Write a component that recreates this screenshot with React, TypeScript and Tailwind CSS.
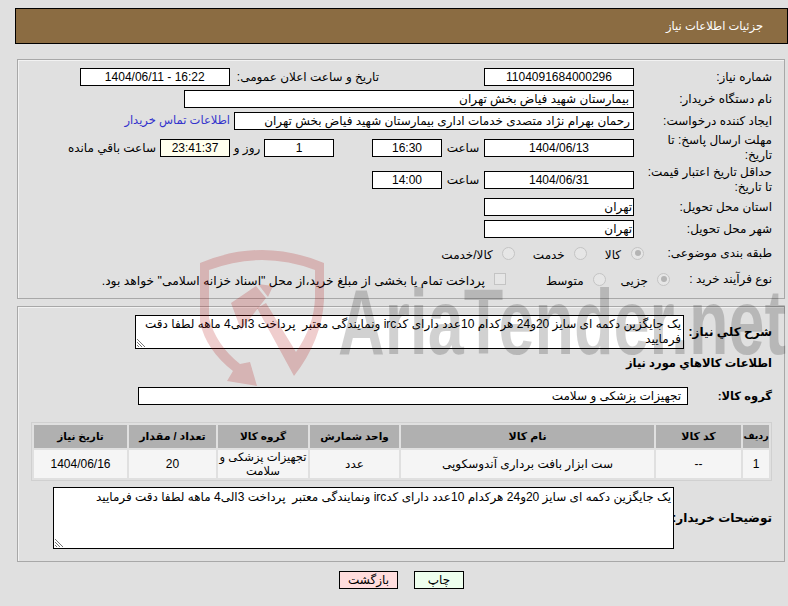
import type { ReactNode } from "react";

const font = "[font-family:'Liberation_Sans','DejaVu_Sans',sans-serif]";
const panel = "border border-[#a8a8a8] shadow-[inset_1px_1px_0_#f2f2f2]";

function Field({ children, className }: { children: ReactNode; className: string }) {
  return (
    <div className={`h-[18px] border border-black bg-white text-[12px] leading-[16px] whitespace-nowrap overflow-hidden shrink-0 ${className}`}>
      {children}
    </div>
  );
}

function Label({ children, className = "" }: { children: ReactNode; className?: string }) {
  return <div className={`w-[134px] shrink-0 text-[12px] leading-[15px] ${className}`}>{children}</div>;
}

function Radio({ on }: { on?: boolean }) {
  return (
    <span className="inline-flex w-[13px] h-[13px] rounded-full border border-[#c4c4c4] bg-[#e6e6e6] items-center justify-center shrink-0">
      {on && <span className="w-[6px] h-[6px] rounded-full bg-[#b4b4b4]" />}
    </span>
  );
}

function Grip() {
  return (
    <svg className="absolute left-px bottom-px" width="8" height="8" viewBox="0 0 8 8" stroke="#777" strokeWidth="1" fill="none">
      <path d="M0 0 L8 8 M0 3 L5 8 M0 6 L2 8" />
    </svg>
  );
}

// the site's watermark lies over the whole form, fields included
function Watermark() {
  return (
    <svg className="absolute left-0 top-0 pointer-events-none [direction:ltr]" width="788" height="606" viewBox="0 0 788 606">
      <path
        d="M200 263 Q262 237 324 263 V300 Q322 340 294 376 L257 308 L266 303 L296 352 Q314 326 315 298 V270 Q262 250 209 270 V318 Q216 345 240 364 L250 362 L257 386 L227 381 L233 371 Q206 350 200 322 Z"
        fill="#b00505"
        fillOpacity="0.2"
      />
      <path d="M231 303 L256 286 L266 298 L241 330 Z M258 284 L273 286 L268 297 Z" fill="#b00505" fillOpacity="0.2" />
      <text
        x="338"
        y="354"
        direction="ltr"
        textAnchor="start"
        fontFamily="'Liberation Sans', sans-serif"
        fontWeight="700"
        fontSize="92"
        fill="#000"
        fillOpacity="0.18"
        textLength="448"
        lengthAdjust="spacingAndGlyphs"
      >
        AriaTender.net
      </text>
    </svg>
  );
}

const desc = "یک جایگزین دکمه ای سایز 20و24 هرکدام 10عدد دارای کدirc ونمایندگی معتبر  پرداخت 3الی4 ماهه لطفا دقت فرمایید";

export default function App() {
  return (
    <div dir="rtl" className={`relative w-[788px] h-[606px] bg-[#e0e0e0] text-black overflow-hidden ${font}`}>
      <div className="mt-2 ml-[15px] h-[36px] border border-black bg-[#8b6c42] text-white text-[11.5px] flex items-center pr-[24px] pt-[2px]">
        جزئیات اطلاعات نیاز
      </div>

      <div className={`mt-[15px] ml-[17px] mr-[3px] h-[240px] pr-[12px] pt-[8px] ${panel}`}>
        <div className="flex items-center h-[18px]">
          <Label>شماره نیاز:</Label>
          <Field className="w-[150px] mr-[4px] text-center">1104091684000296</Field>
          <div className="mr-[105px] text-[12px] whitespace-nowrap shrink-0">تاریخ و ساعت اعلان عمومی:</div>
          <Field className="w-[150px] mr-[7px] text-center [direction:ltr]">1404/06/11 - 16:22</Field>
        </div>
        <div className="flex items-center h-[18px] mt-1">
          <Label>نام دستگاه خریدار:</Label>
          <Field className="w-[450px] mr-[4px] pr-[4px]">بیمارستان شهید فیاض بخش تهران</Field>
        </div>
        <div className="flex items-center h-[18px] mt-1">
          <Label>ایجاد کننده درخواست:</Label>
          <Field className="w-[400px] mr-[4px] pr-[3px]">رحمان بهرام نژاد متصدی خدمات اداری بیمارستان شهید فیاض بخش تهران</Field>
          <a className="mr-[4px] text-[11.5px] text-[#3333cc] whitespace-nowrap">اطلاعات تماس خریدار</a>
        </div>
        <div className="flex items-center h-[30px] mt-[3px]">
          <Label>مهلت ارسال پاسخ: تا تاریخ:</Label>
          <Field className="w-[150px] mr-[4px] text-center">1404/06/13</Field>
          <div className="w-[42px] text-center text-[12px] shrink-0">ساعت</div>
          <Field className="w-[70px] text-center">16:30</Field>
          <div className="w-[38px]" />
          <Field className="w-[70px] text-center">1</Field>
          <div className="w-[34px] text-center text-[12px] shrink-0">روز و</div>
          <Field className="w-[70px] text-center !bg-[#ffffee]">23:41:37</Field>
          <div className="mr-[4px] text-[12px] whitespace-nowrap">ساعت باقي مانده</div>
        </div>
        <div className="flex items-center h-[30px] mt-[2px]">
          <Label>حداقل تاریخ اعتبار قیمت: تا تاریخ:</Label>
          <Field className="w-[150px] mr-[4px] text-center">1404/06/31</Field>
          <div className="w-[42px] text-center text-[12px] shrink-0">ساعت</div>
          <Field className="w-[70px] text-center">14:00</Field>
        </div>
        <div className="flex items-center h-[18px] mt-[3px]">
          <Label>استان محل تحویل:</Label>
          <Field className="w-[150px] mr-[4px] pr-px">تهران</Field>
        </div>
        <div className="flex items-center h-[18px] mt-1">
          <Label>شهر محل تحویل:</Label>
          <Field className="w-[150px] mr-[4px] pr-px">تهران</Field>
        </div>
        <div className="flex items-center h-[18px] mt-[6px] text-[12px]">
          <Label>طبقه بندی موضوعی:</Label>
          <div className="flex items-center gap-[10px] -mr-[6px]"><Radio on /><span className="mt-[4px]">کالا</span></div>
          <div className="flex items-center gap-[9px] mr-[18px]"><Radio /><span className="mt-[4px]">خدمت</span></div>
          <div className="flex items-center gap-[9px] mr-[18px]"><Radio /><span className="mt-[4px]">کالا/خدمت</span></div>
        </div>
        <div className="flex items-center h-[18px] mt-[8px] text-[12px]">
          <Label>نوع فرآیند خرید :</Label>
          <div className="flex items-center gap-[9px] -mr-[32px]"><Radio on /><span className="mt-[4px]">جزیی</span></div>
          <div className="flex items-center gap-[9px] mr-[15px]"><Radio /><span className="mt-[4px]">متوسط</span></div>
          <div className="flex items-center gap-[9px] mr-[40px]">
            <span className="w-[12px] h-[12px] border border-[#c4c4c4] bg-[#e6e6e6] shrink-0" />
            <span className="mt-[4px] whitespace-nowrap text-[12.3px]">پرداخت تمام یا بخشی از مبلغ خرید،از محل "اسناد خزانه اسلامی" خواهد بود.</span>
          </div>
        </div>
      </div>

      <div className={`mt-[7px] ml-[17px] mr-[3px] h-[256px] pr-[12px] pt-[8px] ${panel}`}>
        <div className="flex items-center">
          <Label className="font-bold whitespace-nowrap">شرح کلي نیاز:</Label>
          <div className="w-[549px] h-[34px] -mr-[46px] border border-black bg-white text-[12px] leading-[15px] pr-[2px] pt-px relative shrink-0 whitespace-pre-wrap">
            {desc}
            <Grip />
          </div>
        </div>
        <div className="font-bold text-[11.5px] h-[16px] mt-[6px] leading-[16px]">اطلاعات کالاهاي مورد نیاز</div>
        <div className="flex items-center mt-[16px]">
          <Label className="font-bold !text-[11.5px]">گروه کالا:</Label>
          <Field className="w-[550px] -mr-[50px] pr-[6px]">تجهیزات پزشکی و سلامت</Field>
        </div>
        <table className="mt-[17px] w-[741px] table-fixed border border-[#d0d0d0] border-separate border-spacing-[2px] text-[12px] text-center">
          <thead>
            <tr className="bg-[#b0b0b0] h-[23px]">
              <th className="w-[26px] text-[9.5px] font-bold">ردیف</th>
              <th className="w-[85px] text-[11px] font-bold">کد کالا</th>
              <th className="text-[11px] font-bold">نام کالا</th>
              <th className="w-[89px] text-[10.5px] font-bold">واحد شمارش</th>
              <th className="w-[90px] text-[10.5px] font-bold">گروه کالا</th>
              <th className="w-[87px] text-[11px] font-bold">تعداد / مقدار</th>
              <th className="w-[93px] text-[10.5px] font-bold">تاریخ نیاز</th>
            </tr>
          </thead>
          <tbody>
            <tr className="bg-[#f5f5f5] h-[28px] leading-[14px]">
              <td>1</td>
              <td>--</td>
              <td>ست ابزار بافت برداری آندوسکوپی</td>
              <td>عدد</td>
              <td className="whitespace-nowrap text-[11.5px]">تجهیزات پزشکی و<br />سلامت</td>
              <td>20</td>
              <td>1404/06/16</td>
            </tr>
          </tbody>
        </table>
        <div className="flex items-center mt-[6px]">
          <Label className="font-bold whitespace-nowrap">توضیحات خریدار:</Label>
          <div className="w-[621px] h-[62px] -mr-[36px] border border-black bg-white text-[12px] leading-[15px] pr-[2px] pt-[2px] relative shrink-0 whitespace-pre-wrap">
            {desc}
            <Grip />
          </div>
        </div>
      </div>

      <div className="flex justify-center gap-[16px] mt-[9px] pl-[15px]">
        <button className="w-[50px] h-[18px] border border-black bg-[#eeffee] text-[12px] leading-[14px]">چاپ</button>
        <button className="w-[59px] h-[18px] border border-black bg-[#ffdddd] text-[12px] leading-[14px]">بازگشت</button>
      </div>

      <Watermark />
    </div>
  );
}
